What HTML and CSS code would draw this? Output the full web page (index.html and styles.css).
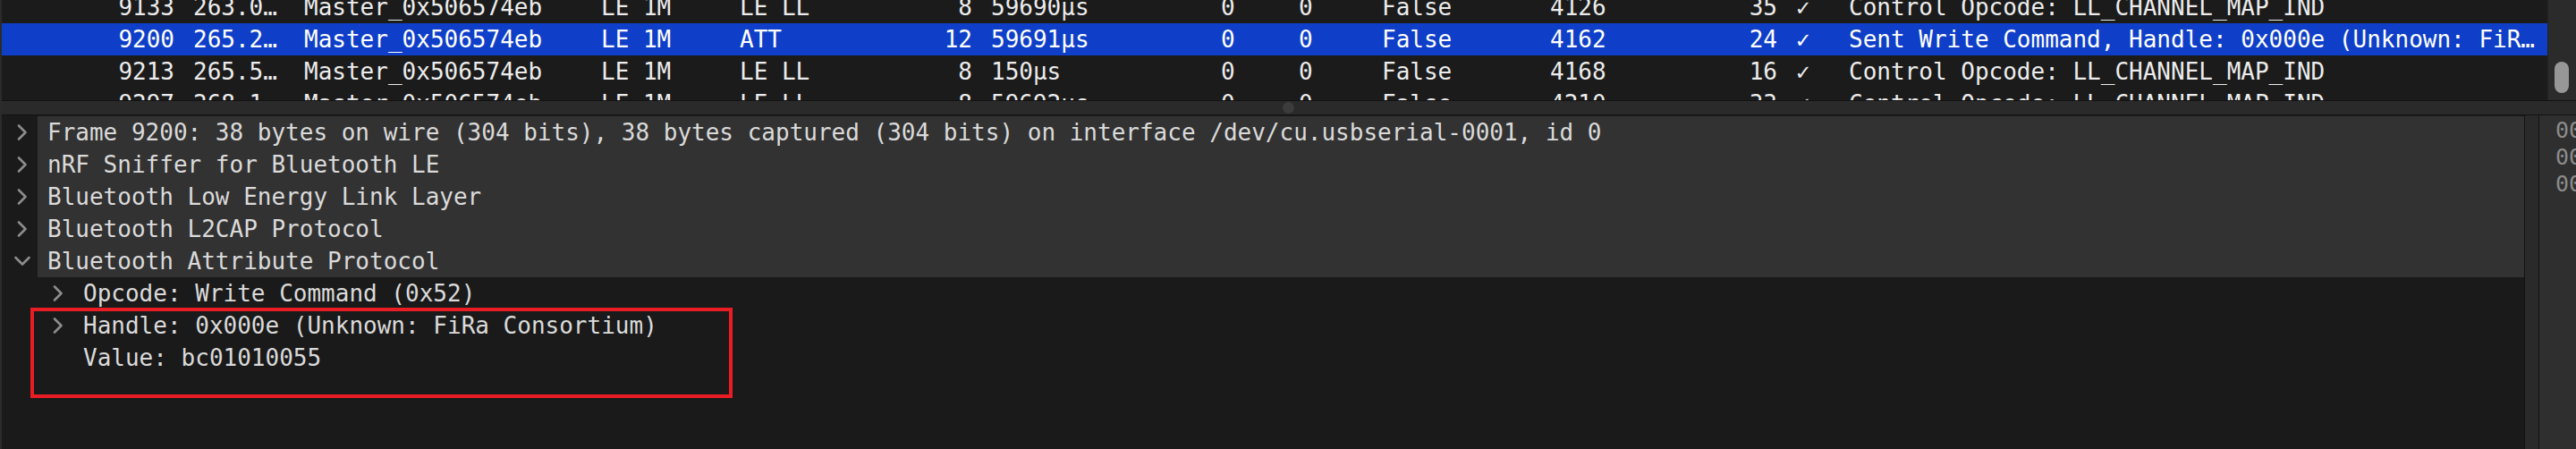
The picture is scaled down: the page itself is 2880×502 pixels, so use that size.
FILE: index.html
```html
<!DOCTYPE html>
<html lang="en">
<head>
<meta charset="utf-8">
<title>Wireshark packet view</title>
<link rel="stylesheet" href="styles.css">
</head>
<body>
<div class="app">
  <section class="packet-list">
    <div class="list-viewport">
      <div class="list-rows">
        <div class="prow">
          <span class="c r">9133</span><span class="c t">263.0…</span><span class="c">Master_0x506574eb</span><span class="c">LE 1M</span><span class="c">LE LL</span><span class="c r">8</span><span class="c t">59690µs</span><span class="c">0</span><span class="c">0</span><span class="c">False</span><span class="c">4126</span><span class="c r">35</span><span class="c k">✓</span><span class="c">Control Opcode: LL_CHANNEL_MAP_IND</span>
        </div>
        <div class="prow selected">
          <span class="c r">9200</span><span class="c t">265.2…</span><span class="c">Master_0x506574eb</span><span class="c">LE 1M</span><span class="c">ATT</span><span class="c r">12</span><span class="c t">59691µs</span><span class="c">0</span><span class="c">0</span><span class="c">False</span><span class="c">4162</span><span class="c r">24</span><span class="c k">✓</span><span class="c">Sent Write Command, Handle: 0x000e (Unknown: FiR…</span>
        </div>
        <div class="prow">
          <span class="c r">9213</span><span class="c t">265.5…</span><span class="c">Master_0x506574eb</span><span class="c">LE 1M</span><span class="c">LE LL</span><span class="c r">8</span><span class="c t">150µs</span><span class="c">0</span><span class="c">0</span><span class="c">False</span><span class="c">4168</span><span class="c r">16</span><span class="c k">✓</span><span class="c">Control Opcode: LL_CHANNEL_MAP_IND</span>
        </div>
        <div class="prow">
          <span class="c r">9297</span><span class="c t">268.1…</span><span class="c">Master_0x506574eb</span><span class="c">LE 1M</span><span class="c">LE LL</span><span class="c r">8</span><span class="c t">59692µs</span><span class="c">0</span><span class="c">0</span><span class="c">False</span><span class="c">4210</span><span class="c r">33</span><span class="c k">✓</span><span class="c">Control Opcode: LL_CHANNEL_MAP_IND</span>
        </div>
      </div>
    </div>
    <div class="vscroll"><div class="vthumb"></div></div>
  </section>

  <div class="hsplit"><span class="grip"></span></div>

  <section class="lower">
    <div class="details">
      <div class="trow top">
        <span class="twisty"><svg class="chev" viewBox="0 0 12 18" width="12" height="18"><polyline points="2,1.5 9.5,9 2,16.5"/></svg></span>
        <span class="label">Frame 9200: 38 bytes on wire (304 bits), 38 bytes captured (304 bits) on interface /dev/cu.usbserial-0001, id 0</span>
      </div>
      <div class="trow top">
        <span class="twisty"><svg class="chev" viewBox="0 0 12 18" width="12" height="18"><polyline points="2,1.5 9.5,9 2,16.5"/></svg></span>
        <span class="label">nRF Sniffer for Bluetooth LE</span>
      </div>
      <div class="trow top">
        <span class="twisty"><svg class="chev" viewBox="0 0 12 18" width="12" height="18"><polyline points="2,1.5 9.5,9 2,16.5"/></svg></span>
        <span class="label">Bluetooth Low Energy Link Layer</span>
      </div>
      <div class="trow top">
        <span class="twisty"><svg class="chev" viewBox="0 0 12 18" width="12" height="18"><polyline points="2,1.5 9.5,9 2,16.5"/></svg></span>
        <span class="label">Bluetooth L2CAP Protocol</span>
      </div>
      <div class="trow top">
        <span class="twisty"><svg class="chev down" viewBox="0 0 18 12" width="18" height="12"><polyline points="1.5,2 9,9.5 16.5,2"/></svg></span>
        <span class="label">Bluetooth Attribute Protocol</span>
      </div>
      <div class="trow child">
        <span class="twisty"><svg class="chev" viewBox="0 0 12 18" width="12" height="18"><polyline points="2,1.5 9.5,9 2,16.5"/></svg></span>
        <span class="label">Opcode: Write Command (0x52)</span>
      </div>
      <div class="trow child">
        <span class="twisty"><svg class="chev" viewBox="0 0 12 18" width="12" height="18"><polyline points="2,1.5 9.5,9 2,16.5"/></svg></span>
        <span class="label">Handle: 0x000e (Unknown: FiRa Consortium)</span>
      </div>
      <div class="trow child">
        <span class="twisty"></span>
        <span class="label">Value: bc01010055</span>
      </div>
      <div class="annotation"></div>
    </div>
    <div class="vsplit"></div>
    <div class="bytes">
      <div class="hexline">0000</div>
      <div class="hexline">0010</div>
      <div class="hexline">0020</div>
    </div>
  </section>
</div>
</body>
</html>
```

FILE: styles.css
```css
html, body {
  margin: 0;
  padding: 0;
  background: #1a1a1a;
}

body {
  width: 2880px;
  height: 502px;
  overflow: hidden;
  font-family: "DejaVu Sans Mono", "Liberation Mono", monospace;
  font-size: 26px;
}

.app {
  width: 2880px;
  height: 502px;
  display: flex;
  flex-direction: column;
  box-sizing: border-box;
  border-left: 2px solid #2b2b2b;
}

/* ---------- packet list ---------- */
.packet-list {
  height: 112px;
  display: flex;
  background: #1b1b1b;
}

.list-viewport {
  flex: 1;
  overflow: hidden;
}

.list-rows {
  margin-top: -10px;
}

.prow {
  display: grid;
  grid-template-columns: 201px 127px 332px 155px 183px 95px 260px 87px 93px 188px 177px 95px 62px 1fr;
  height: 36px;
  line-height: 36px;
  color: #ececec;
  white-space: nowrap;
}

.prow.selected {
  background: #0f3fc8;
  color: #ffffff;
}

.c {
  padding-left: 10px;
  overflow: hidden;
}

.c.t {
  padding-left: 13px;
}

.c.r {
  padding-left: 0;
  padding-right: 8px;
  text-align: right;
}

.c.k {
  padding-left: 13px;
}

.vscroll {
  width: 31px;
  background: #2b2b2b;
  border-left: 1px solid #232323;
  position: relative;
}

.vthumb {
  position: absolute;
  left: 7px;
  top: 69px;
  width: 16px;
  height: 35px;
  border-radius: 8px;
  background: #979797;
}

/* ---------- horizontal splitter ---------- */
.hsplit {
  height: 15px;
  background: #2a2a2a;
  border-top: 1px solid #121212;
  border-bottom: 1px solid #121212;
  display: flex;
  align-items: center;
  justify-content: center;
}

.grip {
  width: 13px;
  height: 13px;
  border-radius: 50%;
  background: #3c3c3c;
  margin-left: -2px;
}

/* ---------- lower panes ---------- */
.lower {
  flex: 1;
  display: flex;
  min-height: 0;
}

.details {
  width: 2820px;
  background: #1a1a1a;
  border-right: 1px solid #121212;
  padding-top: 1px;
  position: relative;
  color: #dadada;
}

.trow {
  display: flex;
  height: 36px;
  line-height: 36px;
  white-space: nowrap;
}

.twisty {
  width: 40px;
  flex: none;
  display: flex;
  align-items: center;
  padding-left: 17px;
  box-sizing: border-box;
}

.chev {
  fill: none;
  stroke: #8c8c8c;
  stroke-width: 2.6;
  stroke-linecap: round;
  stroke-linejoin: round;
}

.chev.down {
  margin-left: -3px;
}

.trow.top .label {
  flex: 1;
  background: #323232;
  padding-left: 11px;
}

.trow.child {
  padding-left: 40px;
}

.trow.child .label {
  padding-left: 11px;
}

.annotation {
  position: absolute;
  left: 32px;
  top: 215px;
  width: 777px;
  height: 93px;
  border: 4px solid #ea1c24;
}

.vsplit {
  width: 15px;
  background: #2a2a2a;
  border-right: 1px solid #121212;
}

.bytes {
  flex: 1;
  background: #2f2f2f;
  padding-top: 2px;
  padding-left: 18px;
  overflow: hidden;
  font-size: 25px;
  color: #8b8b8b;
  white-space: nowrap;
}

.hexline {
  height: 30px;
  line-height: 30px;
}
```
